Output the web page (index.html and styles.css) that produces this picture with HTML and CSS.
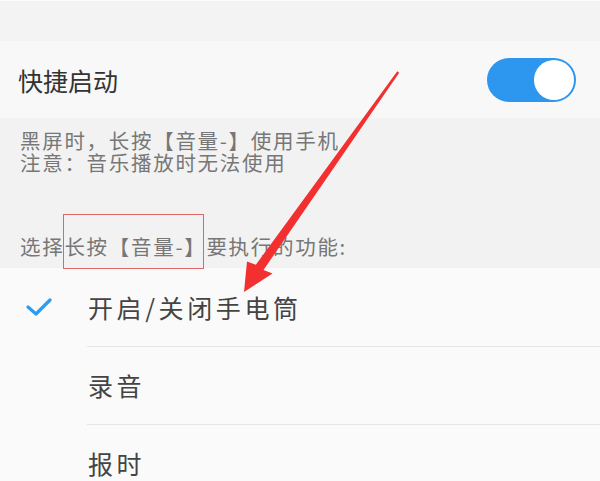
FILE: index.html
```html
<!DOCTYPE html>
<html lang="zh">
<head>
<meta charset="utf-8">
<link rel="stylesheet" href="styles.css">
</head>
<body>
<div class="page">
  <div class="topband"></div>
  <div class="row">
    <span class="title">快捷启动</span>
    <span class="toggle"><span class="knob"></span></span>
  </div>
  <div class="desc">
    <p class="line">黑屏时，长按【音量-】使用手机</p>
    <p class="line">注意：音乐播放时无法使用</p>
    <p class="line choose">选择长按【音量-】要执行的功能:</p>
  </div>
  <ul class="list">
    <li class="item">
      <span class="check">
        <svg width="26" height="22" viewBox="0 0 26 22"><path d="M2 11 L10 18 L24 4" fill="none" stroke="#2a9cf2" stroke-width="3.2" stroke-linecap="round" stroke-linejoin="round"/></svg>
      </span>
      <span class="label">开启/关闭手电筒</span>
    </li>
    <li class="item"><span class="check"></span><span class="label">录音</span></li>
    <li class="item"><span class="check"></span><span class="label">报时</span></li>
  </ul>
  <div class="mark"></div>
  <svg class="arrow" width="600" height="481" viewBox="0 0 600 481">
    <polygon points="397.3,71.3 399.2,72.7 263.5,270 272.5,273.5 244,292 247,261.5 255.8,264.8" fill="#f2302f"/>
  </svg>
</div>
</body>
</html>
```
FILE: styles.css
```css
* { box-sizing: border-box; }
html, body { margin: 0; padding: 0; }
body {
  width: 600px;
  height: 481px;
  overflow: hidden;
  background: #f2f2f2;
  font-family: "Noto Sans CJK SC", "Noto Sans", sans-serif;
}
.page {
  position: relative;
  width: 600px;
  height: 481px;
  display: flex;
  flex-direction: column;
  overflow: hidden;
}
.topband {
  flex-shrink: 0;
  height: 41px;
  background: #f3f3f3;
  border-top: 1px solid #fbfbfb;
}
.row {
  flex-shrink: 0;
  height: 77px;
  background: #f8f8f8;
  display: flex;
  align-items: center;
  justify-content: space-between;
  padding: 0 24px 0 18px;
}
.title {
  font-size: 25px;
  color: #333;
}
.toggle {
  width: 89px;
  height: 44px;
  border-radius: 22px;
  background: #2d96ee;
  display: flex;
  align-items: center;
  justify-content: flex-end;
  padding-right: 2px;
}
.knob {
  width: 40px;
  height: 40px;
  border-radius: 50%;
  background: #fff;
}
.desc {
  flex-shrink: 0;
  height: 150px;
  padding: 11px 0 0 20px;
  background: #f2f2f2;
}
.line {
  margin: 0;
  font-size: 20.5px;
  line-height: 22px;
  color: #777;
  letter-spacing: 1.7px;
}
.choose { margin-top: 62px; }
.list {
  flex-shrink: 0;
  list-style: none;
  margin: 0;
  padding: 0;
  background: #fafafa;
}
.item {
  height: 78px;
  display: flex;
  align-items: center;
  position: relative;
}
.item + .item::before {
  content: "";
  position: absolute;
  top: 0;
  left: 87px;
  right: 0;
  height: 1px;
  background: #e6e6e6;
}
.check {
  width: 88px;
  display: flex;
  padding-left: 26px;
}
.label {
  font-size: 25px;
  color: #444;
  letter-spacing: 3.6px;
}
.mark {
  position: absolute;
  left: 63px;
  top: 214px;
  width: 141px;
  height: 55px;
  border: 1.3px solid #e06565;
}
.arrow {
  position: absolute;
  left: 0;
  top: 0;
}
```
